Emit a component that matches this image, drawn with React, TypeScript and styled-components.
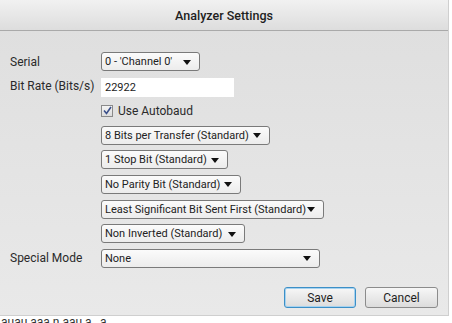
import React, { useState } from 'react';
import styled, { createGlobalStyle } from 'styled-components';

const GlobalStyle = createGlobalStyle`
  body {
    margin: 0;
    background: #ffffff;
    font-family: Roboto, 'Noto Sans', sans-serif;
  }
`;

const Dialog = styled.div`
  width: 449px;
  height: 316px;
  background: linear-gradient(#dedede, #e9e9e9);
  border-right: 1px solid #cfcfcf;
  border-bottom: 1px solid #cfcfcf;
  box-sizing: border-box;
  display: flex;
  flex-direction: column;
`;

const TitleBar = styled.div`
  height: 31px;
  box-sizing: border-box;
  background: linear-gradient(#f1f1f1, #dddddd);
  border-bottom: 1px solid #a9a9a9;
  display: flex;
  align-items: center;
  justify-content: center;
  font-size: 12.5px;
  font-weight: 500;
  color: #1e1e1e;
`;

const Body = styled.div`
  flex: 1;
  padding: 21px 10px 0 10px;
  display: grid;
  grid-template-columns: 91px auto;
  grid-auto-rows: 19px;
  row-gap: 5.6px;
  align-items: center;
  justify-items: start;
`;

const Label = styled.div`
  grid-column: 1;
  font-size: 12px;
  color: #2a2a2a;
`;

const Field = styled.div`
  grid-column: 2;
`;

const Select = styled.div<{ $width: number }>`
  width: ${({ $width }) => $width}px;
  height: 19px;
  box-sizing: border-box;
  border: 1px solid #7a7a7a;
  border-radius: 3px;
  background: linear-gradient(#fbfbfb, #ececec);
  display: flex;
  align-items: center;
  justify-content: space-between;
  padding: 0 8px 0 3px;
  font-size: 11px;
  color: #222;
  white-space: nowrap;
`;

const Arrow = styled.span`
  width: 0;
  height: 0;
  border-left: 4px solid transparent;
  border-right: 4px solid transparent;
  border-top: 5px solid #111;
  margin-top: 1px;
  flex-shrink: 0;
`;

const TextInput = styled.input`
  width: 133px;
  height: 19px;
  box-sizing: border-box;
  border: none;
  background: #ffffff;
  padding: 0 4px;
  font-family: inherit;
  font-size: 11px;
  color: #222;
  outline: none;
`;

const CheckRow = styled.label`
  display: flex;
  align-items: center;
  gap: 5px;
  font-size: 12px;
  color: #2a2a2a;
`;

const CheckBox = styled.span`
  width: 12px;
  height: 12px;
  box-sizing: border-box;
  border: 1px solid #8a8a8a;
  background: linear-gradient(#f4f4f4, #dcdcdc);
  display: flex;
  align-items: center;
  justify-content: center;
`;

const Footer = styled.div`
  display: flex;
  justify-content: flex-end;
  gap: 9px;
  padding: 0 10px 7px 0;
`;

const Button = styled.button<{ $focused?: boolean }>`
  width: ${({ $focused }) => ($focused ? 72 : 73)}px;
  height: 21px;
  box-sizing: border-box;
  border: 1px solid ${({ $focused }) => ($focused ? '#3c8fc7' : '#8c8c8c')};
  border-radius: 3px;
  background: linear-gradient(#f7f7f7, #dcdcdc);
  box-shadow: ${({ $focused }) => ($focused ? 'inset 0 0 0 1px #a6d2ef' : 'none')};
  font-family: inherit;
  font-size: 12px;
  color: #1e1e1e;
  padding: 0;
`;

const Below = styled.div`
  height: 7px;
  overflow: hidden;
  font-size: 12px;
  color: #333;
  white-space: nowrap;
  line-height: 12px;
  padding-left: 1px;
`;

const options = [
  { text: '8 Bits per Transfer (Standard)', width: 169 },
  { text: '1 Stop Bit (Standard)', width: 127 },
  { text: 'No Parity Bit (Standard)', width: 140 },
  { text: 'Least Significant Bit Sent First (Standard)', width: 223 },
  { text: 'Non Inverted (Standard)', width: 144 },
];

const App: React.FC = () => {
  const [rate, setRate] = useState('22922');

  return (
    <>
      <GlobalStyle />
      <Dialog>
        <TitleBar>Analyzer Settings</TitleBar>
        <Body>
          <Label>Serial</Label>
          <Field>
            <Select $width={99}>
              0 - 'Channel 0'
              <Arrow />
            </Select>
          </Field>

          <Label>Bit Rate (Bits/s)</Label>
          <Field>
            <TextInput value={rate} onChange={(e) => setRate(e.target.value)} />
          </Field>

          <Field>
            <CheckRow>
              <CheckBox>
                <svg width='9' height='9' viewBox='0 0 9 9'>
                  <path d='M1 4.5 L3.5 7.5 L8 1' fill='none' stroke='#3a4f8a' strokeWidth='1.6' />
                </svg>
              </CheckBox>
              Use Autobaud
            </CheckRow>
          </Field>

          {options.map((o) => (
            <Field key={o.text}>
              <Select $width={o.width}>
                {o.text}
                <Arrow />
              </Select>
            </Field>
          ))}

          <Label>Special Mode</Label>
          <Field>
            <Select $width={219}>
              None
              <Arrow />
            </Select>
          </Field>
        </Body>
        <Footer>
          <Button $focused>Save</Button>
          <Button>Cancel</Button>
        </Footer>
      </Dialog>
      <Below>auau aaa n aau a , a</Below>
    </>
  );
};

export default App;
